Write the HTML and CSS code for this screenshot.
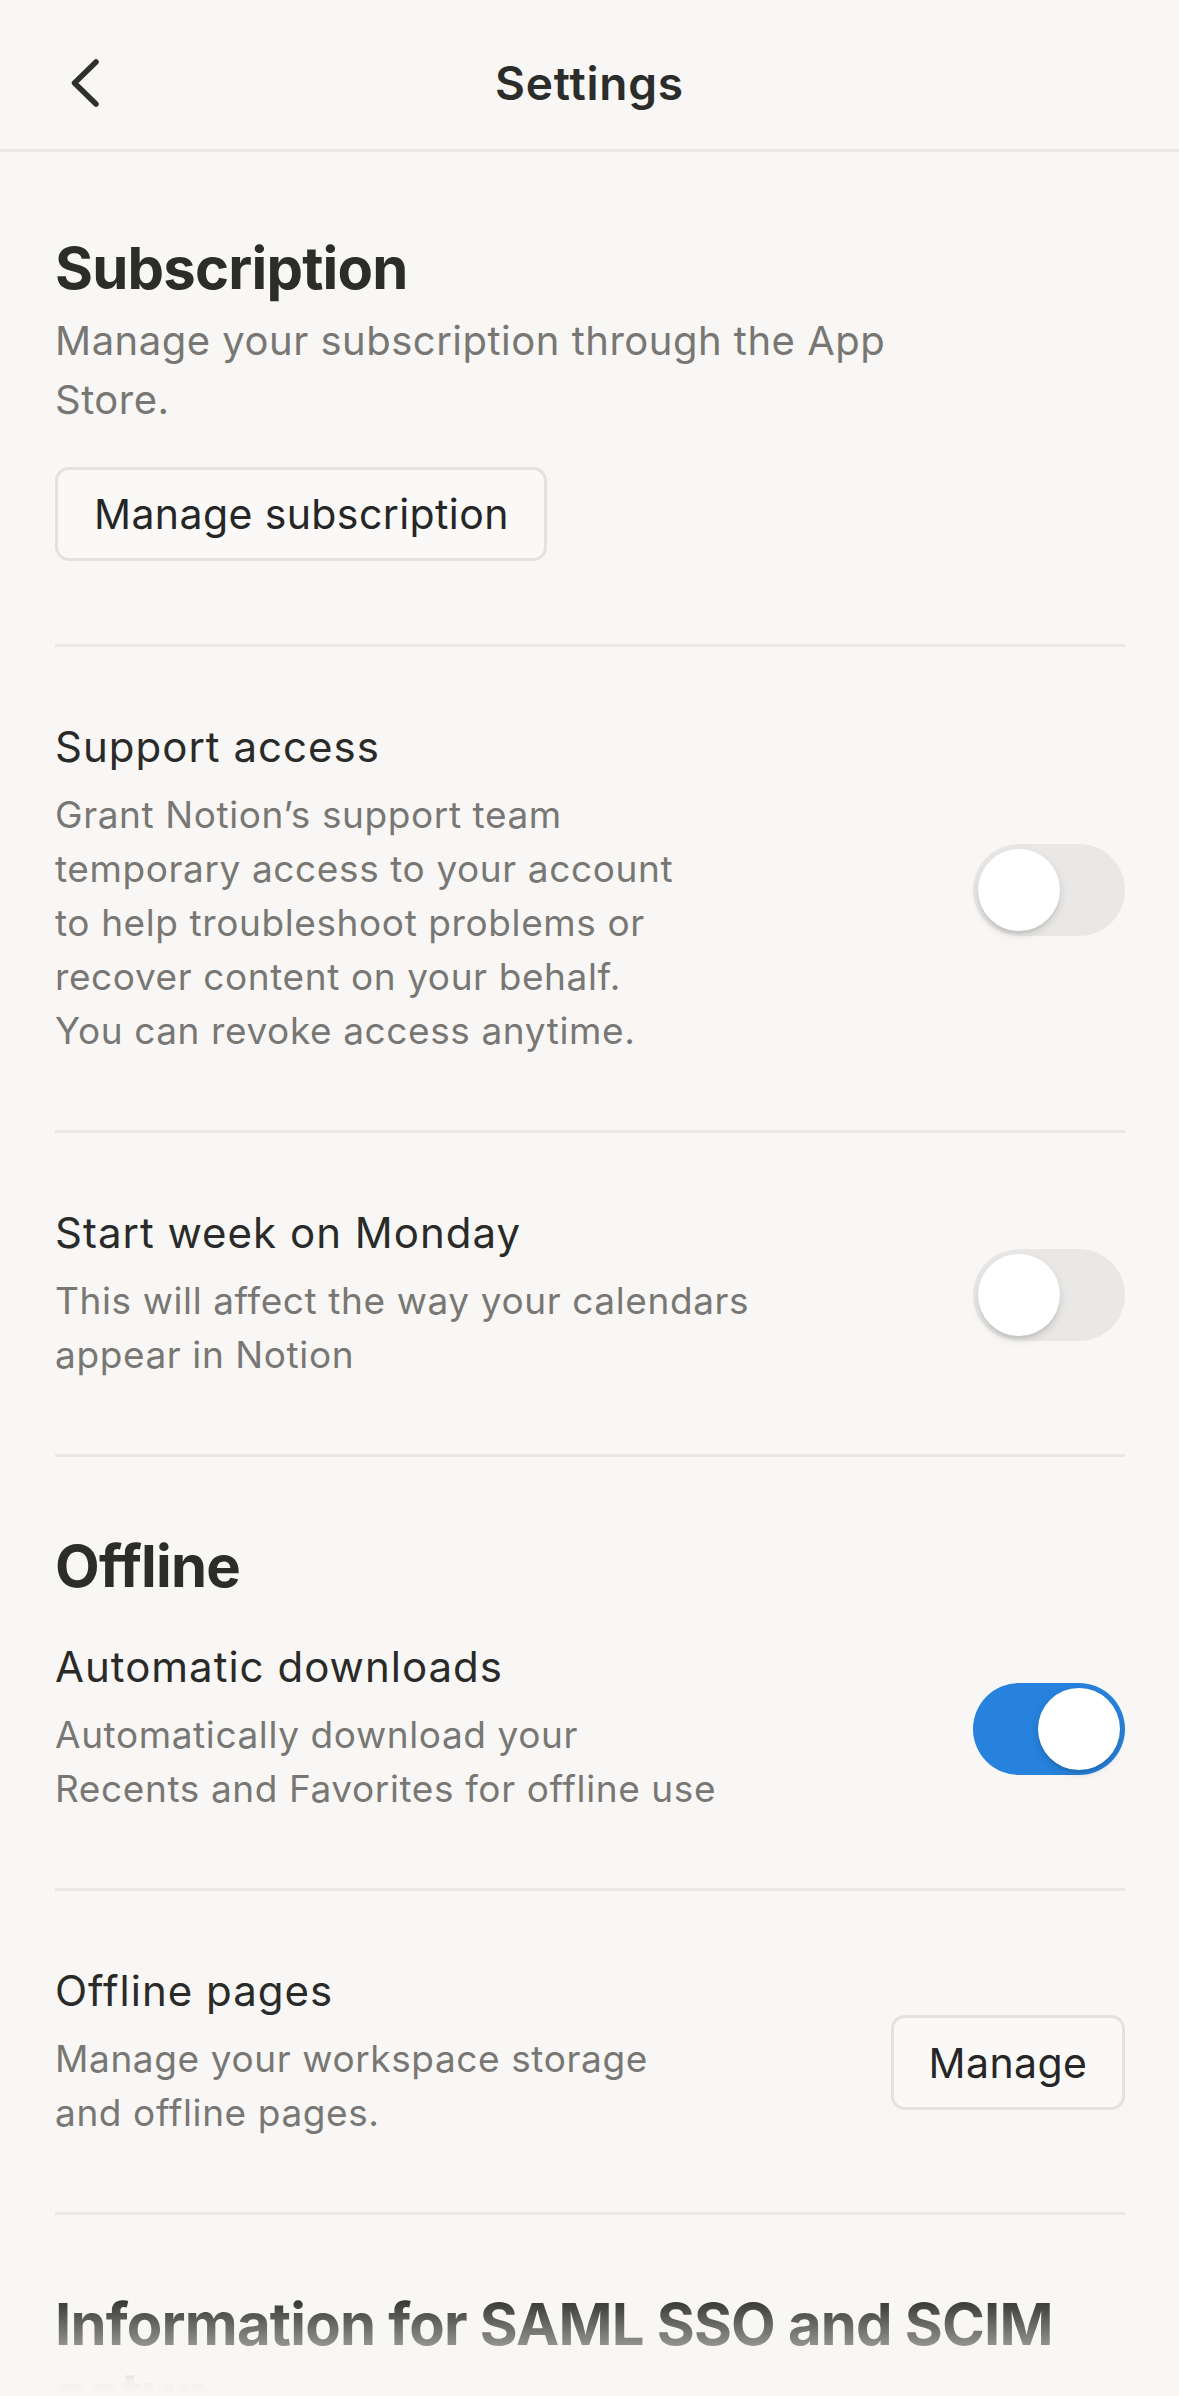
FILE: index.html
```html
<!DOCTYPE html>
<html lang="en">
<head>
    <meta charset="UTF-8">
    <meta name="viewport" content="width=device-width, initial-scale=1.0">
    <title>Settings</title>
    <link rel="stylesheet" href="styles.css">
</head>
<body>
    <div class="screen">
        <header class="nav">
            <a class="nav-back" href="#" aria-label="Back">
                <svg width="32" height="52" viewBox="0 0 32 52">
                    <polyline points="27,5 5.5,26 27,47" fill="none" stroke="#2f2f2e" stroke-width="5.5" stroke-linecap="round" stroke-linejoin="round"/>
                </svg>
            </a>
            <h1 class="nav-title">Settings</h1>
            <span></span>
        </header>

        <main class="content">
            <section class="group">
                <h2 class="group-title">Subscription</h2>
                <p class="group-desc">Manage your subscription through the App<br>Store.</p>
                <button class="btn btn-wide">Manage subscription</button>
            </section>

            <hr class="divider">

            <div class="row">
                <div class="row-text">
                    <div class="row-title">Support access</div>
                    <p class="row-desc">Grant Notion’s support team<br>temporary access to your account<br>to help troubleshoot problems or<br>recover content on your behalf.<br>You can revoke access anytime.</p>
                </div>
                <span class="toggle"><span class="knob"></span></span>
            </div>

            <hr class="divider">

            <div class="row">
                <div class="row-text">
                    <div class="row-title">Start week on Monday</div>
                    <p class="row-desc">This will affect the way your calendars<br>appear in Notion</p>
                </div>
                <span class="toggle"><span class="knob"></span></span>
            </div>

            <hr class="divider">

            <section class="group">
                <h2 class="group-title">Offline</h2>
                <div class="row">
                    <div class="row-text">
                        <div class="row-title">Automatic downloads</div>
                        <p class="row-desc">Automatically download your<br>Recents and Favorites for offline use</p>
                    </div>
                    <span class="toggle on"><span class="knob"></span></span>
                </div>
            </section>

            <hr class="divider">

            <div class="row">
                <div class="row-text">
                    <div class="row-title">Offline pages</div>
                    <p class="row-desc">Manage your workspace storage<br>and offline pages.</p>
                </div>
                <button class="btn btn-side">Manage</button>
            </div>

            <hr class="divider">

            <section class="group">
                <h2 class="group-title">Information for SAML SSO and SCIM<br>setup</h2>
            </section>
        </main>

        <div class="fade"></div>
    </div>
</body>
</html>
```

FILE: styles.css
```css
body {
    margin: 0;
    background-color: #f8f7f5;
    font-family: Inter, "Noto Sans", sans-serif;
    color: #2c2c2b;
}
.screen {
    position: relative;
    height: 2396px;
    overflow: hidden;
}

/* top bar */
.nav {
    display: grid;
    grid-template-columns: 1fr auto 1fr;
    align-items: center;
    box-sizing: border-box;
    height: 152px;
    padding-top: 17px;
    border-bottom: 3px solid #e9e8e6;
}
.nav-back {
    display: flex;
    padding-left: 69px;
}
.nav-title {
    margin: 0;
    font-size: 46px;
    line-height: 54px;
    font-weight: 600;
    letter-spacing: 0.8px;
    color: #2c2c2b;
}

.content {
    padding: 0 54px 0 55px;
}

/* sections */
.group {
    padding-top: 74px;
}
.group:first-child {
    padding-top: 81px;
    padding-bottom: 83px;
}
.group-title {
    margin: 0;
    font-size: 58px;
    line-height: 70px;
    font-weight: 700;
    letter-spacing: -0.8px;
}
.group-desc {
    margin: 8px 0 0;
    font-size: 40px;
    line-height: 59px;
    letter-spacing: 0.5px;
    color: #787774;
}
.divider {
    margin: 0;
    border: none;
    height: 3px;
    background-color: #e9e8e6;
}

/* rows */
.row {
    display: flex;
    align-items: center;
    justify-content: space-between;
    padding: 75px 0 72px;
}
.group-title + .row {
    padding-top: 41px;
}
.row-title {
    font-size: 42px;
    line-height: 50px;
    letter-spacing: 1px;
    color: #2a2a29;
}
.row-desc {
    margin: 16px 0 0;
    font-size: 37px;
    line-height: 54px;
    letter-spacing: 0.6px;
    color: #787774;
    white-space: nowrap;
}

/* buttons */
.btn {
    font-family: inherit;
    font-size: 41px;
    letter-spacing: 0.4px;
    color: #262626;
    background-color: #faf9f8;
    border: 3px solid #e3e2e0;
    border-radius: 14px;
    box-sizing: border-box;
    cursor: pointer;
}
.btn-wide {
    display: block;
    margin-top: 38px;
    width: 492px;
    height: 94px;
    padding: 0 0 0 36px;
    text-align: left;
}
.btn-side {
    margin-top: 19px;
    width: 234px;
    height: 95px;
    padding: 0;
}

/* switches */
.toggle {
    display: flex;
    align-items: center;
    flex-shrink: 0;
    box-sizing: border-box;
    width: 152px;
    height: 92px;
    padding: 0 5px;
    border-radius: 46px;
    background-color: #e9e8e6;
}
.toggle.on {
    justify-content: flex-end;
    background-color: #2682dc;
}
.knob {
    width: 82px;
    height: 82px;
    border-radius: 50%;
    background-color: #fff;
    box-shadow: 0 4px 8px rgba(0, 0, 0, 0.13), 0 3px 1px rgba(0, 0, 0, 0.05);
}

/* bottom fade over the scroll edge */
.fade {
    position: absolute;
    left: 0;
    right: 0;
    bottom: 0;
    height: 101px;
    background: linear-gradient(rgba(248, 247, 245, 0), rgba(248, 247, 245, 0.5) 50%, rgba(248, 247, 245, 0.97) 85%, #f8f7f5);
}
```
